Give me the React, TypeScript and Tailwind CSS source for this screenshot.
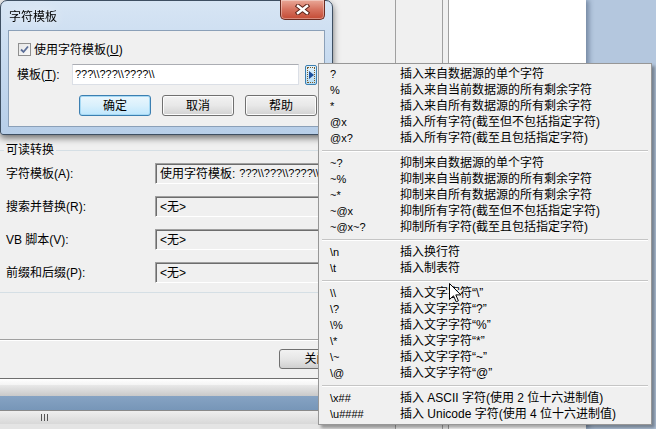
import React from "react";

const font = "font-['Liberation_Sans','Noto_Sans_CJK_SC',sans-serif]";

type Item = { key: string; desc: string };

// Template tokens shown in the popup, grouped by separator
const groups: Item[][] = [
  [
    { key: "?", desc: "插入来自数据源的单个字符" },
    { key: "%", desc: "插入来自当前数据源的所有剩余字符" },
    { key: "*", desc: "插入来自所有数据源的所有剩余字符" },
    { key: "@x", desc: "插入所有字符(截至但不包括指定字符)" },
    { key: "@x?", desc: "插入所有字符(截至且包括指定字符)" },
  ],
  [
    { key: "~?", desc: "抑制来自数据源的单个字符" },
    { key: "~%", desc: "抑制来自当前数据源的所有剩余字符" },
    { key: "~*", desc: "抑制来自所有数据源的所有剩余字符" },
    { key: "~@x", desc: "抑制所有字符(截至但不包括指定字符)" },
    { key: "~@x~?", desc: "抑制所有字符(截至且包括指定字符)" },
  ],
  [
    { key: "\\n", desc: "插入换行符" },
    { key: "\\t", desc: "插入制表符" },
  ],
  [
    { key: "\\\\", desc: "插入文字字符“\\”" },
    { key: "\\?", desc: "插入文字字符“?”" },
    { key: "\\%", desc: "插入文字字符“%”" },
    { key: "\\*", desc: "插入文字字符“*”" },
    { key: "\\~", desc: "插入文字字符“~”" },
    { key: "\\@", desc: "插入文字字符“@”" },
  ],
  [
    { key: "\\x##", desc: "插入 ASCII 字符(使用 2 位十六进制值)" },
    { key: "\\u####", desc: "插入 Unicode 字符(使用 4 位十六进制值)" },
  ],
];

const template = "???\\\\???\\\\????\\\\";

const fields = [
  { label: "字符模板(A):", value: "使用字符模板:", extra: template },
  { label: "搜索并替换(R):", value: "<无>" },
  { label: "VB 脚本(V):", value: "<无>" },
  { label: "前缀和后缀(P):", value: "<无>" },
];

const BackWindow = () => (
  <div className="absolute left-0 top-0 w-[586px] h-[429px] flex shadow-[3px_0_5px_rgba(40,60,90,0.45)]">
    {/* main panel */}
    <div className="w-[395px] flex flex-col bg-[#f0f0f0]">
      <div className="h-[143px] shrink-0" />
      {/* group box header */}
      <div className="h-[14px] flex items-center">
        <div className="w-[4px] h-px bg-[#d5dfe5]" />
        <span className="px-[2px] leading-[14px]">可读转换</span>
        <div className="flex-1 h-px bg-[#d5dfe5]" />
      </div>
      <div className="mt-[6px] flex flex-col gap-[12px]">
        {fields.map((f) => (
          <div key={f.label} className="h-[21px] flex items-center">
            <span className="w-[155px] pl-[6px] leading-[16px]">{f.label}</span>
            <div className="flex-1 h-[21px] flex items-center pl-[4px] border border-[#a0a0a0] border-b-white border-r-white shadow-[inset_1px_1px_0_#6d6d6d] whitespace-nowrap overflow-hidden">
              {f.value}
              {f.extra && <span className="ml-[4px] text-[11px]">{f.extra}</span>}
            </div>
          </div>
        ))}
      </div>
      <div className="mt-[9px] h-px bg-[#d5dfe5]" />
      <div className="mt-[46px] h-px bg-[#a0a0a0]" />
      <div className="h-px bg-white" />
      <div className="mt-[8px] ml-[279px] w-[75px] h-[20px] flex items-center justify-center rounded-[3px] border border-[#707070] bg-gradient-to-b from-[#f2f2f2] via-[#e6e6e6] to-[#d0d0d0]">
        关闭
      </div>
      <div className="mt-[9px] h-px bg-[#6e6e6e]" />
      <div className="h-[6px] bg-gradient-to-b from-white to-[#f4f4f4]" />
      <div className="h-[11px] bg-gradient-to-b from-[#e9e9e9] to-[#c9c9c9]" />
      <div className="h-[15px] bg-gradient-to-b from-[#86a3c3] to-[#7796b8] border-b border-[#8a8a8a]" />
      <div className="h-[13px] flex items-center bg-gradient-to-b from-[#efefef] to-[#d8d8d8]">
        <div className="ml-[41px] flex gap-[2px]">
          <div className="w-px h-[7px] bg-[#555]" />
          <div className="w-px h-[7px] bg-[#555]" />
          <div className="w-px h-[7px] bg-[#555]" />
        </div>
      </div>
      <div className="flex-1 bg-[#e4e4e4]" />
    </div>
    <div className="w-px bg-[#a0a0a0]" />
    <div className="w-[46px] bg-[#f0f0f0]" />
    <div className="w-[7px] border-x border-[#a0a0a0] bg-[#f0f0f0]" />
    <div className="flex-1 bg-white" />
  </div>
);

const CloseButton = () => (
  <div className="-mt-px w-[45px] h-[20px] flex items-center justify-center rounded-b-[5px] border border-t-0 border-[#6b2b20] bg-gradient-to-b from-[#e9a898] via-[#d6725f] to-[#c44a34] shadow-[inset_0_0_0_1px_rgba(255,255,255,0.35)]">
    <svg width="15" height="11" viewBox="0 0 15 11">
      <path d="M3 2 L12 9 M12 2 L3 9" stroke="#5b2218" strokeWidth="4.5" strokeLinecap="square" />
      <path d="M3 2 L12 9 M12 2 L3 9" stroke="#fff" strokeWidth="2.5" strokeLinecap="square" />
    </svg>
  </div>
);

const Button = ({ label, primary }: { label: string; primary?: boolean }) => (
  <div
    className={
      primary
        ? "h-[21px] w-[72px] flex items-center justify-center rounded-[3px] border border-[#3c7fb1] bg-gradient-to-b from-[#eaf6fd] via-[#d9f0fc] to-[#bee6fd] shadow-[inset_0_0_0_1px_#a6d9f4]"
        : "h-[21px] w-[72px] flex items-center justify-center rounded-[3px] border border-[#707070] bg-gradient-to-b from-[#f2f2f2] via-[#e8e8e8] to-[#d2d2d2] shadow-[inset_0_0_0_1px_#fcfcfc]"
    }
  >
    {label}
  </div>
);

const Dialog = () => (
  <div className="absolute left-0 top-0 w-[333px] h-[135px] flex flex-col px-[7px] pb-[7px] rounded-t-[7px] rounded-b-[3px] border border-[#3e4f62] bg-gradient-to-b from-[#d7e5f4] via-[#c5d9ef] to-[#b7cee8] shadow-[0_3px_7px_rgba(0,0,0,0.55)]">
    <div className="h-[29px] flex justify-between items-start">
      <span className="mt-[8px] pl-px leading-[16px] drop-shadow-[0_0_6px_rgba(255,255,255,0.9)]">字符模板</span>
      <CloseButton />
    </div>
    <div className="flex-1 flex flex-col bg-[#f0f0f0] border border-[#8ba0b8]">
      <div className="mt-[12px] ml-[9px] h-[13px] flex items-center">
        <div className="w-[13px] h-[13px] flex items-center justify-center border border-[#8f8f8f] bg-gradient-to-br from-[#e6e6e6] to-[#f9f9f9]">
          <svg width="9" height="9" viewBox="0 0 9 9">
            <path d="M1 4.5 L3.5 7 L8 1.5" fill="none" stroke="#5b6e98" strokeWidth="1.8" />
          </svg>
        </div>
        <span className="ml-[3px] leading-[16px]">
          使用字符模板(<span className="underline">U</span>)
        </span>
      </div>
      <div className="mt-[8px] ml-[8px] h-[21px] flex items-center">
        <span className="w-[55px] leading-[16px]">
          模板(<span className="underline">T</span>):
        </span>
        <div className="w-[227px] h-[21px] flex items-center pl-[2px] bg-white border border-[#dbdfe6] border-t-[#abadb3] text-[11px]">
          {template}
        </div>
        <div className="ml-[6px] w-[12px] h-[20px] flex items-center justify-center rounded-[2px] border border-[#3c7fb1] bg-gradient-to-b from-[#e3f3fc] to-[#b5dcf4]">
          <div className="w-[8px] h-[16px] flex items-center justify-center border border-dotted border-[#7a5a2a]">
            <svg width="5" height="8" viewBox="0 0 5 8">
              <path d="M0 0 L5 4 L0 8 Z" fill="#1c4f9c" />
            </svg>
          </div>
        </div>
      </div>
      <div className="mt-[10px] ml-[70px] flex gap-[11px]">
        <Button label="确定" primary />
        <Button label="取消" />
        <Button label="帮助" />
      </div>
    </div>
  </div>
);

const Menu = () => (
  <div className="absolute left-[318px] top-[63px] w-[334px] py-[2px] border border-[#979797] bg-[#f0f0f0] shadow-[3px_3px_3px_rgba(0,0,0,0.35)]">
    {groups.map((g, i) => (
      <React.Fragment key={i}>
        {i > 0 && <div className="mx-[3px] mt-[4px] mb-[3px] border-t border-[#c5c5c5] border-b border-b-white" />}
        {g.map((it) => (
          <div key={it.key} className="h-[16px] flex items-center pl-[11px] whitespace-nowrap">
            <span className="w-[70px] text-[11px] leading-[16px]">{it.key}</span>
            <span className="leading-[16px]">{it.desc}</span>
          </div>
        ))}
      </React.Fragment>
    ))}
  </div>
);

const Cursor = () => (
  <svg className="absolute left-[449px] top-[283px]" width="13" height="20" viewBox="0 0 13 20">
    <path d="M0.5 0.5 L0.5 16.5 L4.5 12.8 L7.2 18.8 L9.4 17.8 L6.8 11.9 L11.8 11.9 Z" fill="#fff" stroke="#000" strokeWidth="1" strokeLinejoin="round" />
  </svg>
);

export default function App() {
  return (
    <div className={`relative w-[656px] h-[429px] overflow-hidden bg-[#b4c7de] text-[12px] text-black ${font}`}>
      <BackWindow />
      <Dialog />
      <Menu />
      <Cursor />
    </div>
  );
}
